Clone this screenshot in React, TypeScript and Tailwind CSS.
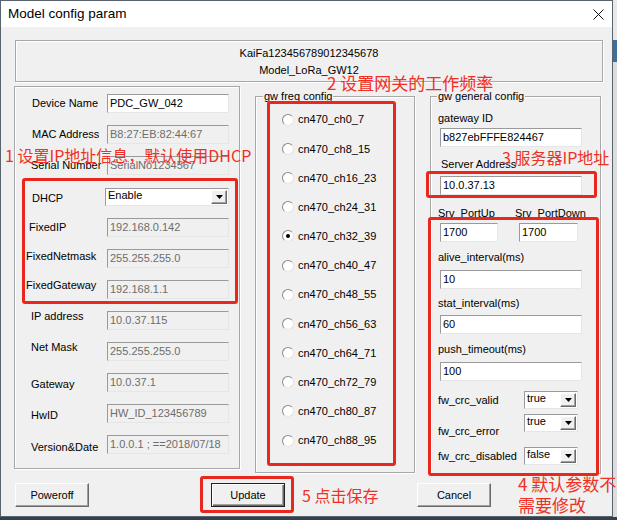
import React from "react";

const UI = "font-['Liberation_Sans',Arial,sans-serif]";
const CJK = "font-['Noto_Sans_CJK_SC','Noto_Sans',sans-serif]";
const sunken =
  "border border-t-[#9a9a9a] border-l-[#9a9a9a] border-r-[#e6e6e6] border-b-[#e6e6e6]";
const raised =
  "border border-t-white border-l-white border-r-[#6b6b6b] border-b-[#6b6b6b] shadow-[inset_-1px_-1px_0_#a0a0a0]";
const groupBox =
  "border border-[#a8a8a8] shadow-[1px_1px_0_#ffffff,inset_1px_1px_0_#ffffff]";

function TextBox({ value, width, disabled = false }: { value: string; width: string; disabled?: boolean }) {
  return (
    <div
      className={`${width} h-[19px] ${sunken} flex items-center pl-[2px] overflow-hidden whitespace-nowrap ${
        disabled ? "bg-[#f0f0f0] text-[#6d6d6d]" : "bg-white text-black"
      }`}
    >
      {value}
    </div>
  );
}

function Combo({ value, width }: { value: string; width: string }) {
  return (
    <div className={`${width} h-[18px] ${sunken} bg-white flex items-stretch`}>
      <span className="flex-1 pl-[2px] leading-[13px] text-black">{value}</span>
      <span className={`w-[16px] m-px bg-[#f0f0f0] ${raised} flex items-center justify-center`}>
        <svg width="7" height="4" viewBox="0 0 7 4">
          <path d="M0 0h7L3.5 4z" fill="#000" />
        </svg>
      </span>
    </div>
  );
}

function Radio({ label, checked = false }: { label: string; checked?: boolean }) {
  return (
    <div className="h-[29.2px] flex items-center pl-[26px]">
      <span className="w-[12px] h-[12px] rounded-full bg-white border border-t-[#8a8a8a] border-l-[#8a8a8a] border-r-[#e4e4e4] border-b-[#e4e4e4] flex items-center justify-center">
        {checked && <span className="w-[4px] h-[4px] rounded-full bg-black" />}
      </span>
      <span className="ml-[4px]">{label}</span>
    </div>
  );
}

type Row = { label: string; value: string; pad: string; shift: string; enabled?: boolean; combo?: boolean };

const leftRows: Row[] = [
  { label: "Device Name", value: "PDC_GW_042", pad: "pl-[17px]", shift: "pt-0", enabled: true },
  { label: "MAC Address", value: "B8:27:EB:82:44:67", pad: "pl-[17px]", shift: "pb-[1px]" },
  { label: "Serial Number", value: "SerialNo1234567", pad: "pl-[16px]", shift: "pt-0" },
  { label: "DHCP", value: "Enable", pad: "pl-[17px]", shift: "pt-[4px]", combo: true },
  { label: "FixedIP", value: "192.168.0.142", pad: "pl-[14px]", shift: "pt-0" },
  { label: "FixedNetmask", value: "255.255.255.0", pad: "pl-[11px]", shift: "pb-[4px]" },
  { label: "FixedGateway", value: "192.168.1.1", pad: "pl-[11px]", shift: "pb-[9px]" },
  { label: "IP address", value: "10.0.37.115", pad: "pl-[16px]", shift: "pb-[8px]" },
  { label: "Net Mask", value: "255.255.255.0", pad: "pl-[16px]", shift: "pb-[8px]" },
  { label: "Gateway", value: "10.0.37.1", pad: "pl-[16px]", shift: "pt-[4px]" },
  { label: "HwID", value: "HW_ID_123456789", pad: "pl-[16px]", shift: "pt-[4px]" },
  { label: "Version&Date", value: "1.0.0.1 ; ==2018/07/18", pad: "pl-[16px]", shift: "pt-[6px]" },
];

const channels = [
  "cn470_ch0_7",
  "cn470_ch8_15",
  "cn470_ch16_23",
  "cn470_ch24_31",
  "cn470_ch32_39",
  "cn470_ch40_47",
  "cn470_ch48_55",
  "cn470_ch56_63",
  "cn470_ch64_71",
  "cn470_ch72_79",
  "cn470_ch80_87",
  "cn470_ch88_95",
];

export default function App() {
  return (
    <div className={`${UI} relative w-[617px] h-[520px] overflow-hidden bg-[#34414c] flex items-start text-[11px] text-black`}>
      {/* Dialog window */}
      <div className="w-[613px] h-[517px] border border-[#59636d] bg-[#f0f0f0] flex flex-col shrink-0">
        {/* Title bar */}
        <div className="h-[26px] bg-white flex items-center justify-between pl-[7px] pr-[8px]">
          <span className="text-[13.5px] leading-none">Model config param</span>
          <svg width="11" height="11" viewBox="0 0 11 11">
            <path d="M0.5 0.5L10.5 10.5M10.5 0.5L0.5 10.5" stroke="#111" strokeWidth="1" />
          </svg>
        </div>

        {/* Model header */}
        <div className={`mt-[13px] ml-[14px] w-[588px] h-[42px] ${groupBox} flex flex-col items-center pt-[4px] leading-[17px]`}>
          <span>KaiFa123456789012345678</span>
          <span>Model_LoRa_GW12</span>
        </div>

        {/* Panels */}
        <div className="h-[392px] flex items-start">
          {/* Network info */}
          <div className={`mt-[4px] ml-[13px] w-[226px] h-[383px] ${groupBox} pt-px`}>
            {leftRows.map((r) => (
              <div key={r.label} className="h-[31px] flex items-center">
                <div className={`w-[92px] shrink-0 whitespace-nowrap ${r.pad} ${r.shift}`}>{r.label}</div>
                {r.combo ? (
                  <div className="-ml-[2px]">
                    <Combo value={r.value} width="w-[124px]" />
                  </div>
                ) : (
                  <TextBox value={r.value} width="w-[122px]" disabled={!r.enabled} />
                )}
              </div>
            ))}
          </div>

          {/* Frequency config */}
          <div className={`relative mt-[14px] ml-[15px] w-[160px] h-[377px] ${groupBox} pt-[8px]`}>
            <span className="absolute -top-[8px] left-[7px] px-px bg-[#f0f0f0] leading-[14px]">gw freq config</span>
            {channels.map((c) => (
              <Radio key={c} label={c} checked={c === "cn470_ch32_39"} />
            ))}
          </div>

          {/* General config */}
          <div className={`relative mt-[14px] ml-[15px] w-[171px] h-[378px] ${groupBox} flex flex-col`}>
            <span className="absolute -top-[8px] left-[6px] px-px bg-[#f0f0f0] leading-[14px]">gw general config</span>
            <div className="mt-[15px] pl-[7px] leading-[13px]">gateway ID</div>
            <div className="mt-[3px] ml-[9px]">
              <TextBox value="b827ebFFFE824467" width="w-[142px]" />
            </div>
            <div className="mt-[11px] pl-[10px] leading-[13px]">Server Address</div>
            <div className="mt-[5px] ml-[9px]">
              <TextBox value="10.0.37.13" width="w-[142px]" />
            </div>
            <div className="mt-[12px] flex leading-[13px]">
              <span className="pl-[7px] w-[84px]">Srv_PortUp</span>
              <span>Srv_PortDown</span>
            </div>
            <div className="mt-[3px] ml-[9px] flex gap-[21px]">
              <TextBox value="1700" width="w-[58px]" />
              <TextBox value="1700" width="w-[59px]" />
            </div>
            <div className="mt-[9px] pl-[7px] leading-[13px]">alive_interval(ms)</div>
            <div className="mt-[6px] ml-[9px]">
              <TextBox value="10" width="w-[142px]" />
            </div>
            <div className="mt-[8px] pl-[7px] leading-[13px]">stat_interval(ms)</div>
            <div className="mt-[5px] ml-[9px]">
              <TextBox value="60" width="w-[142px]" />
            </div>
            <div className="mt-[9px] pl-[7px] leading-[13px]">push_timeout(ms)</div>
            <div className="mt-[6px] ml-[9px]">
              <TextBox value="100" width="w-[142px]" />
            </div>
            <div className="mt-[10px] h-[18px] flex items-center">
              <span className="pl-[7px] w-[93px]">fw_crc_valid</span>
              <Combo value="true" width="w-[54px]" />
            </div>
            <div className="mt-[5px] h-[18px] flex items-start">
              <span className="pl-[7px] w-[93px] pt-[9px]">fw_crc_error</span>
              <Combo value="true" width="w-[54px]" />
            </div>
            <div className="mt-[15px] h-[18px] flex items-center">
              <span className="pl-[7px] w-[93px]">fw_crc_disabled</span>
              <Combo value="false" width="w-[54px]" />
            </div>
          </div>
        </div>

        {/* Buttons */}
        <div className="mt-[9px] flex">
          <button className={`ml-[14px] w-[74px] h-[24px] bg-[#f0f0f0] ${raised} text-[11px]`}>Poweroff</button>
          <button className="ml-[122px] w-[74px] h-[24px] bg-[#f0f0f0] border border-[#222] shadow-[inset_1px_1px_0_#fff,inset_-1px_-1px_0_#6b6b6b,inset_-2px_-2px_0_#a0a0a0] text-[11px]">
            Update
          </button>
          <button className={`ml-[132px] w-[74px] h-[24px] bg-[#f0f0f0] ${raised} text-[11px]`}>Cancel</button>
        </div>
      </div>

      {/* Background glimpse to the right of the dialog */}
      <div className="flex-1 h-[517px] flex flex-col">
        <div className="h-[40px] bg-[#e8e8e8]" />
        <div className="h-[22px] bg-[#3f6f9c]" />
        <div className="flex-1 bg-[#dcdcdc]" />
      </div>

      {/* Red annotation boxes */}
      <div className="absolute left-[22px] top-[178px] w-[216px] h-[126px] border-[3px] border-[#e8271f] rounded-[3px]" />
      <div className="absolute left-[267px] top-[101px] w-[129px] h-[365px] border-[3px] border-[#e8271f] rounded-[3px]" />
      <div className="absolute left-[426px] top-[171px] w-[171px] h-[27px] border-[3px] border-[#e8271f] rounded-[3px]" />
      <div className="absolute left-[428px] top-[217px] w-[171px] h-[259px] border-[3px] border-[#e8271f] rounded-[3px]" />
      <div className="absolute left-[200px] top-[476px] w-[94px] h-[37px] border-[3px] border-[#e8271f] rounded-[3px]" />

      {/* Red annotation text */}
      <div className={`${CJK} absolute left-[5px] top-[144px] text-[16px] leading-[22px] text-[#ee3124] whitespace-nowrap`}>
        1 设置IP地址信息，默认使用DHCP
      </div>
      <div className={`${CJK} absolute left-[327px] top-[72px] text-[17px] leading-[22px] text-[#ee3124] whitespace-nowrap`}>
        2 设置网关的工作频率
      </div>
      <div className={`${CJK} absolute left-[502px] top-[146px] text-[16px] leading-[22px] text-[#ee3124] whitespace-nowrap`}>
        3 服务器IP地址
      </div>
      <div className={`${CJK} absolute left-[518px] top-[473px] text-[17px] leading-[21px] text-[#ee3124] whitespace-nowrap`}>
        <div>4 默认参数不</div>
        <div>需要修改</div>
      </div>
      <div className={`${CJK} absolute left-[302px] top-[484px] text-[16px] leading-[22px] text-[#ee3124] whitespace-nowrap`}>
        5 点击保存
      </div>
    </div>
  );
}
